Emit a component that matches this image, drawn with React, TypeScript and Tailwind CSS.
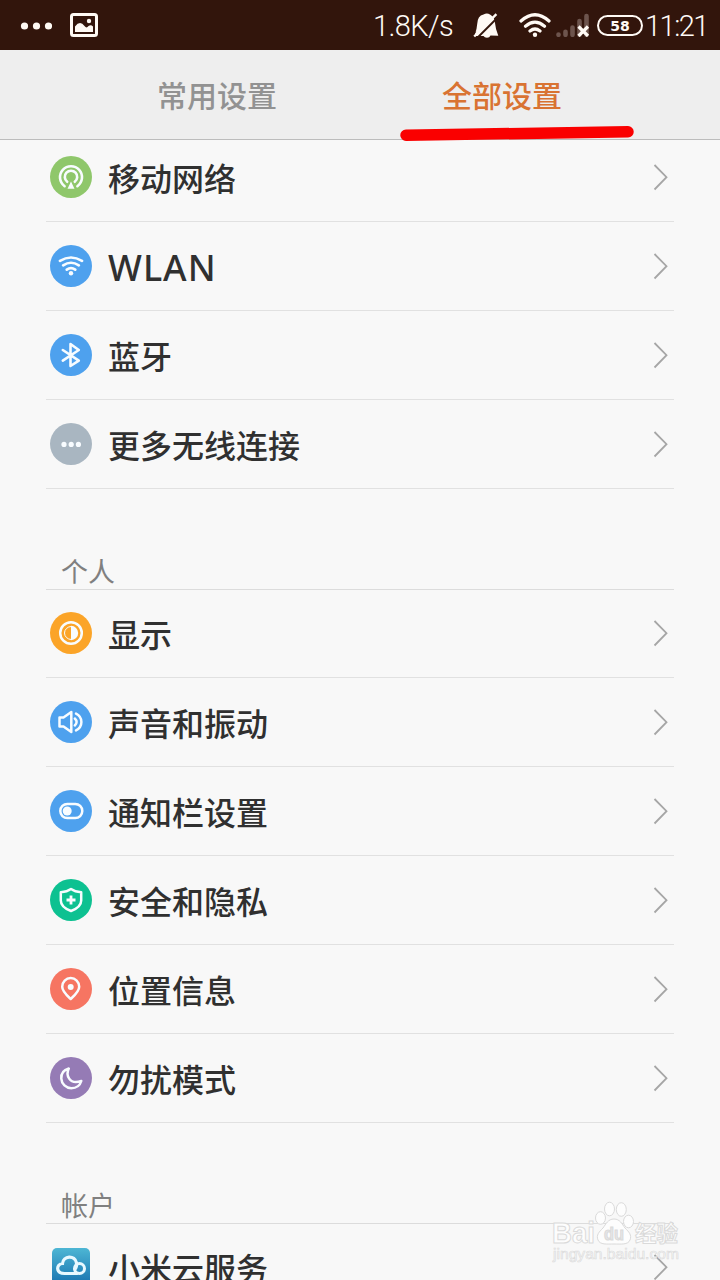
import type { ReactNode } from 'react';

type Item = {
  label: string;
  color: string;
  icon: ReactNode;
  labelClass?: string;
};

const wireless: Item[] = [
  {
    label: '移动网络',
    color: 'bg-[#8fc76b]',
    icon: (
      <>
        <path d="M14.6 30.2A11 11 0 1 1 27.4 30.2" strokeWidth="2.6" />
        <path d="M17.2 25.8A6.2 6.2 0 1 1 24.8 25.8" strokeWidth="2.6" />
        <path d="M21 25.5l3.5 7.2h-7z" fill="currentColor" stroke="none" />
      </>
    ),
  },
  {
    label: 'WLAN',
    color: 'bg-[#4ea1ee]',
    labelClass: "pt-[3px] font-['Noto_Sans',sans-serif] text-[36px] tracking-[1px] font-medium",
    icon: (
      <>
        <path d="M10 15.8Q21 9.2 32 15.8M13.2 20.3Q21 15.2 28.8 20.3M16.8 24.6Q21 21.6 25.2 24.6" strokeWidth="2.7" />
        <circle cx="21" cy="28.2" r="2.2" fill="currentColor" stroke="none" />
      </>
    ),
  },
  {
    label: '蓝牙',
    color: 'bg-[#4ea1ee]',
    icon: <path d="M12.8 16l16 10.6-8.3 5.4V10l8.3 6-16 10.6" strokeWidth="2.6" />,
  },
  {
    label: '更多无线连接',
    color: 'bg-[#a9b6c1]',
    icon: (
      <g fill="currentColor" stroke="none">
        <circle cx="14" cy="21.4" r="2.6" />
        <circle cx="21.2" cy="21.4" r="2.6" />
        <circle cx="28.4" cy="21.4" r="2.6" />
      </g>
    ),
  },
];

const personal: Item[] = [
  {
    label: '显示',
    color: 'bg-[#fba428]',
    icon: (
      <>
        <circle cx="21" cy="21" r="10.8" strokeWidth="2.5" />
        <path d="M21 14.5a6.5 6.5 0 0 0 0 13" strokeWidth="1" />
        <path d="M21 13.8a7.2 7.2 0 0 1 0 14.4z" fill="currentColor" stroke="none" />
      </>
    ),
  },
  {
    label: '声音和振动',
    color: 'bg-[#4ea1ee]',
    icon: (
      <>
        <path d="M9.5 16.5h4L21.3 11v20l-7.8-5.5h-4z" strokeWidth="2.5" />
        <path d="M24.8 17.5q3.6 3.5 0 7M26 12.6c7.2 3.6 7.2 13.2 0 16.8" strokeWidth="2.5" />
      </>
    ),
  },
  {
    label: '通知栏设置',
    color: 'bg-[#4ea1ee]',
    icon: (
      <>
        <rect x="10.3" y="13.9" width="22" height="14.2" rx="7.1" strokeWidth="2.5" />
        <circle cx="17.2" cy="21" r="4.5" fill="currentColor" stroke="none" />
      </>
    ),
  },
  {
    label: '安全和隐私',
    color: 'bg-[#0dc191]',
    icon: (
      <>
        <path d="M21 10c3 2.2 6.5 3 10.2 3.2v8.3c0 5-4 8.2-10.2 10.5-6.2-2.3-10.2-5.5-10.2-10.5v-8.3C14.5 13 18 12.2 21 10z" strokeWidth="2.5" />
        <path d="M21 16.5v9M16.5 21h9" strokeWidth="2.8" strokeLinecap="butt" />
      </>
    ),
  },
  {
    label: '位置信息',
    color: 'bg-[#f67562]',
    icon: (
      <>
        <path d="M20.7 31c-4-3.6-8.5-7.4-8.5-12.2a8.5 8.7 0 0 1 17 0c0 4.8-4.5 8.6-8.5 12.2z" strokeWidth="2.5" />
        <circle cx="20.7" cy="19" r="3" fill="currentColor" stroke="none" />
      </>
    ),
  },
  {
    label: '勿扰模式',
    color: 'bg-[#957bb5]',
    icon: (
      <path
        d="M18.8 11.5C13.5 13 11 17 11.3 21.6c.3 5.4 4.7 9.6 10 9.6 4.7 0 8.6-2.6 10-7.2-5.5 1.9-9.9.9-12.1-2.4-2.1-3.1-2.2-6.5-.4-10.1z"
        strokeWidth="2.5"
      />
    ),
  },
];

function Chevron() {
  return (
    <svg className="mr-1.5 h-7 w-4 shrink-0" viewBox="0 0 16 28" fill="none" stroke="#a6a6a6" strokeWidth="1.8">
      <path d="M2.5 2l12 12.2-12 12.3" />
    </svg>
  );
}

function Row({ item, className = 'h-[89px]' }: { item: Item; className?: string }) {
  return (
    <li className={`flex items-center border-b border-[#e1e1e1] pl-1 ${className}`}>
      <span className={`size-[42px] shrink-0 rounded-full text-[#f8fcff] ${item.color}`}>
        <svg viewBox="0 0 42 42" fill="none" stroke="currentColor" strokeLinecap="round" strokeLinejoin="round">
          {item.icon}
        </svg>
      </span>
      <span className={`ml-4 flex-1 leading-10 text-[#303030] ${item.labelClass ?? 'pt-1.5 text-[32px] font-medium'}`}>
        {item.label}
      </span>
      <Chevron />
    </li>
  );
}

function SectionTitle({ children }: { children: ReactNode }) {
  return (
    <h2 className="flex h-[101px] items-end border-b border-[#dcdcdc] pl-[15px] text-[27px] leading-8 text-[#808080]">
      {children}
    </h2>
  );
}

function StatusBar() {
  return (
    <header className="flex h-[50px] items-center bg-[#32150c] pr-3 pl-5 font-['Roboto',sans-serif] text-[#fffaf5]">
      <svg className="mt-px h-2 w-8" viewBox="0 0 32 8" fill="currentColor">
        <circle cx="4.5" cy="4" r="3.6" />
        <circle cx="16.5" cy="4" r="3.6" />
        <circle cx="28.5" cy="4" r="3.6" />
      </svg>
      <svg className="ml-[18px] h-6 w-7" viewBox="0 0 28 24" fill="none">
        <rect x="1.5" y="1.5" width="25" height="21" rx="2" stroke="currentColor" strokeWidth="3" />
        <path d="M5 19v-5.5q5-6.5 9.5-.5 2 2.8 4 0 2.5-1.5 4.5.5V19z" fill="currentColor" />
        <circle cx="19" cy="8" r="2.2" fill="currentColor" />
      </svg>

      <span className="ml-auto w-[81px] pt-0.5 text-[29px] leading-none font-light tracking-[-0.6px] whitespace-nowrap">
        1.8K/s
      </span>
      <svg className="ml-[19px] h-[25px] w-[26px]" viewBox="0 0 26 25">
        <path
          d="M2 20.5Q3.8 17 4.2 11 4.500 3 10.500 1.600 14-.6 17 1.600 21.500 4 22 10q.5 6 3.300 12.700L17.500 22.500q-1 2.200-3.500 2.200t-3.500-1.700H3z"
          fill="currentColor"
        />
        <path d="M4.200 25L27 2.100" stroke="#32150c" strokeWidth="2" />
        <path d="M0 25V21l3.500-3.500z" fill="#32150c" />
        <path d="M1.200 23.500L23.400 1.200" stroke="currentColor" strokeWidth="2.4" />
      </svg>
      <svg className="ml-5 h-6 w-8" viewBox="0 0 32 24" fill="none" stroke="currentColor" strokeWidth="3.2" strokeLinecap="round">
        <path d="M2 8Q16-4.5 30 8M6.5 13.2q9.5-8 19 0M11 18q5-4 10 0" />
        <circle cx="16" cy="21.8" r="2.2" fill="currentColor" stroke="none" />
      </svg>
      <svg className="ml-[5px] h-6 w-[34px]" viewBox="0 0 34 24" fill="none" strokeLinecap="round">
        <path d="M2.5 21.5v.3M9.5 18.8v3M16.5 14.5v7.3M23.5 8v13.8M30.5 3v18.8" stroke="#6d544d" strokeWidth="4.6" />
        <path d="M22.5 13.5l9.500 9.500M32 13.5l-9.500 9.500" stroke="currentColor" strokeWidth="3.2" strokeLinecap="butt" />
      </svg>
      <span className="ml-[7px] flex h-[21px] w-[46px] items-center justify-center rounded-full border-2 border-current pt-px font-['DejaVu_Sans',sans-serif] text-[14px] leading-none font-bold">
        58
      </span>
      <span className="ml-0.5 w-[63px] pt-[3px] text-[29px] leading-none font-light tracking-[-1.5px] whitespace-nowrap">
        11:21
      </span>
    </header>
  );
}

function Watermark() {
  return (
    <svg className="absolute right-9 bottom-3 h-[70px] w-[136px]" viewBox="0 0 136 70" fill="#fdfdfd" stroke="#dadada" strokeWidth="1">
      <g fontFamily="Liberation Sans, Noto Sans CJK SC, sans-serif" fontWeight="bold">
        <text x="4" y="45" fontSize="29" textLength="43" lengthAdjust="spacingAndGlyphs">Bai</text>
        <ellipse cx="52.5" cy="20" rx="5" ry="6.3" />
        <ellipse cx="61.5" cy="11" rx="5" ry="6.8" />
        <ellipse cx="73.3" cy="11.5" rx="5" ry="6.8" />
        <ellipse cx="80.5" cy="23.5" rx="5" ry="6.3" />
        <path d="M66 21c6 0 8 5 11 9 4 4 7 7 5 12-2 5-9 4-16 4s-14 1-16-4c-2-5 1-8 5-12 3-4 5-9 11-9z" />
        <text x="56" y="42" fontSize="18" textLength="20" lengthAdjust="spacingAndGlyphs" fill="#e6e6e6">du</text>
        <text x="87" y="43" fontSize="22" textLength="43" lengthAdjust="spacingAndGlyphs">经验</text>
      </g>
      <text x="5" y="61" fontSize="14" strokeWidth=".6" textLength="126" lengthAdjust="spacingAndGlyphs" fontFamily="Liberation Sans, sans-serif">
        jingyan.baidu.com
      </text>
    </svg>
  );
}

export default function App() {
  return (
    <div className="relative flex h-[1280px] w-[720px] flex-col overflow-hidden bg-[#f8f8f8] font-['Roboto','Noto_Sans_CJK_SC',sans-serif]">
      <StatusBar />

      {/* Tabs */}
      <nav className="relative flex h-[90px] shrink-0 items-center border-b border-[#bcbcbc] bg-[#eeeeee] px-[74px] pt-[3px] text-[30px] font-medium">
        <button className="w-[286px] text-center text-[#929292]">常用设置</button>
        <button className="w-[284px] text-center text-[#d97332]">全部设置</button>
        <svg className="absolute top-[74px] left-[398px] h-5 w-[240px]" viewBox="0 0 240 20">
          <path d="M8 11.2L230 7.8" stroke="#fa0000" strokeWidth="11.5" strokeLinecap="round" />
        </svg>
      </nav>

      {/* Settings list, scrolled slightly under the tabs */}
      <main className="min-h-0 flex-1 overflow-hidden px-[46px]">
        <ul className="-mt-[7px]">
          {wireless.map((item) => (
            <Row key={item.label} item={item} />
          ))}
        </ul>

        <SectionTitle>个人</SectionTitle>
        <ul>
          {personal.map((item, i) => (
            <Row key={item.label} item={item} className={i === 0 ? 'h-[88px] pb-px' : 'h-[89px]'} />
          ))}
        </ul>

        <SectionTitle>帐户</SectionTitle>
        <div className="flex h-[86px] items-center pl-1.5">
          <span className="size-[38px] shrink-0 rounded-[5px] bg-linear-to-b from-[#4db6d4] to-[#1670ae] text-[#e8f8ff]">
            <svg viewBox="0 0 38 38" fill="none" stroke="currentColor" strokeWidth="3.2" strokeLinecap="round">
              <path d="M25 25.5H12.5c-9 0-8.5-9.5-2-10C11 7.5 23 6.5 24.5 15" />
              <circle cx="27.5" cy="20.5" r="5" strokeWidth="3" />
              <path d="M24.5 15q.5 4-1.5 6" />
            </svg>
          </span>
          <span className="ml-[18px] flex-1 pt-[5px] text-[32px] leading-10 font-medium text-[#303030]">小米云服务</span>
          <Chevron />
        </div>
      </main>

      <Watermark />
    </div>
  );
}
